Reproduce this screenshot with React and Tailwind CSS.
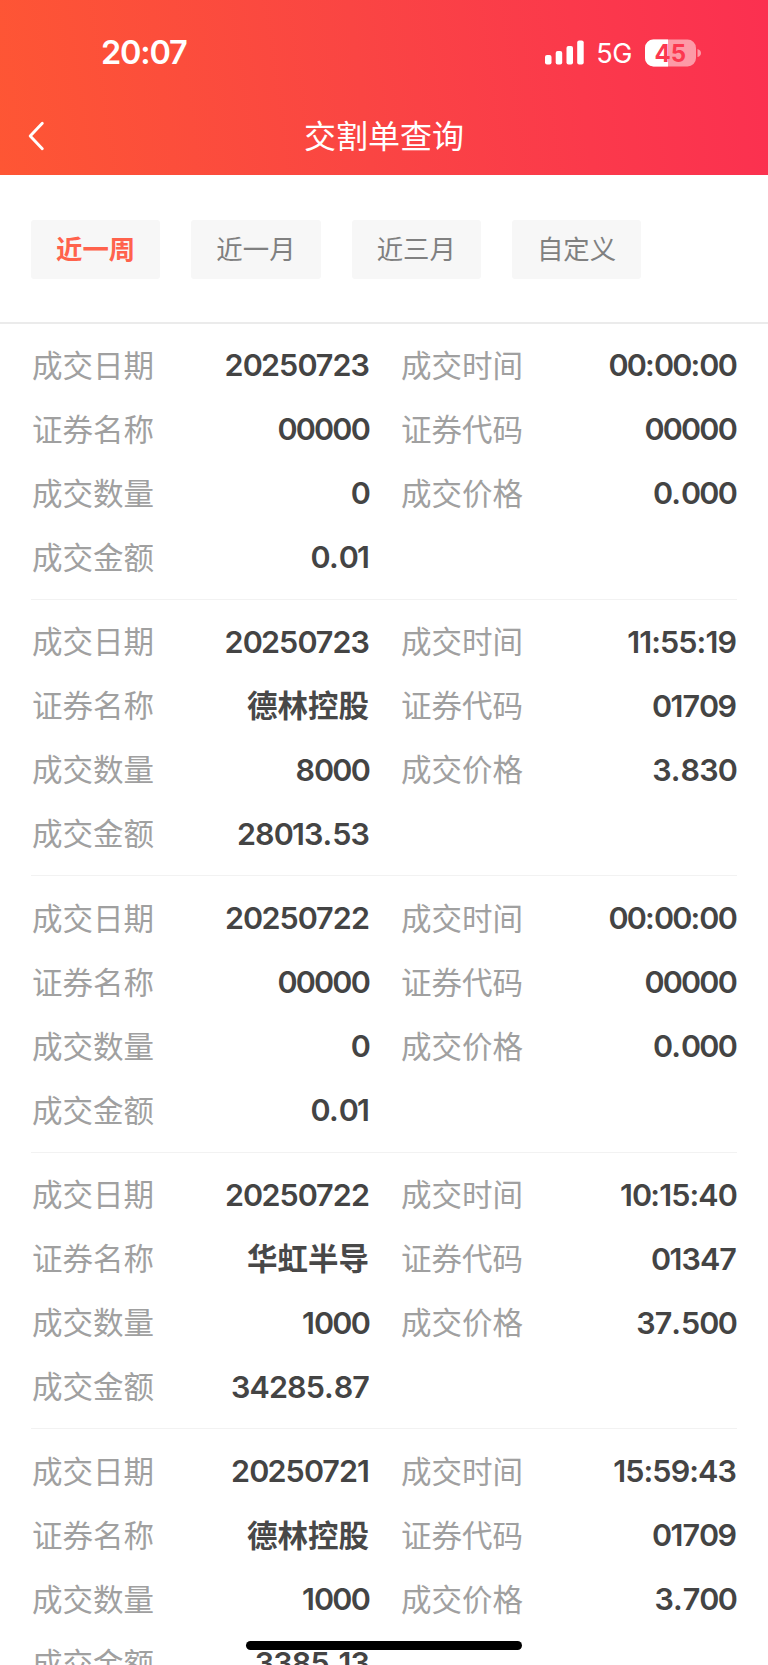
const filters = ['近一周', '近一月', '近三月', '自定义'];

const records = [
  { date: '20250723', time: '00:00:00', name: '00000', code: '00000', count: '0', price: '0.000', amount: '0.01' },
  { date: '20250723', time: '11:55:19', name: '德林控股', code: '01709', count: '8000', price: '3.830', amount: '28013.53' },
  { date: '20250722', time: '00:00:00', name: '00000', code: '00000', count: '0', price: '0.000', amount: '0.01' },
  { date: '20250722', time: '10:15:40', name: '华虹半导', code: '01347', count: '1000', price: '37.500', amount: '34285.87' },
  { date: '20250721', time: '15:59:43', name: '德林控股', code: '01709', count: '1000', price: '3.700', amount: '3385.13' },
];

function StatusBar() {
  return (
    <div className="flex h-[98px] items-center justify-between pt-[7px] pr-[66px] pl-[101px]">
      <span className="pt-[2px] text-[32.5px] leading-none font-semibold tracking-[-1.2px]">20:07</span>
      <div className="flex items-center">
        <svg className="mb-px" width="40" height="26" viewBox="0 0 40 26" fill="#fff">
          <rect x="1" y="16" width="6.5" height="9.5" rx="2" />
          <rect x="11.7" y="12" width="6.5" height="13.5" rx="2" />
          <rect x="22.5" y="7" width="6.5" height="18.5" rx="2" />
          <rect x="33.2" y="1.5" width="6.5" height="24" rx="2" />
        </svg>
        <span className="ml-[12px] pt-[2px] text-[27px] leading-none tracking-[-0.4px]">5G</span>
        <svg className="ml-[13px]" width="57" height="28" viewBox="0 0 57 28">
          <clipPath id="level">
            <rect x="0" y="0" width="23" height="28" />
          </clipPath>
          <rect x="0" y="0.5" width="51" height="27" rx="8.5" fill="#fff" fillOpacity="0.5" />
          <rect x="0" y="0.5" width="51" height="27" rx="8.5" fill="#fff" clipPath="url(#level)" />
          <path d="M52.5 10 Q56 11 56 14 Q56 17 52.5 18 Z" fill="#fff" fillOpacity="0.5" />
          <text x="25.3" y="22.5" textAnchor="middle" fontSize="24" fontWeight="700" fill="#fc3850">45</text>
        </svg>
      </div>
    </div>
  );
}

function Header() {
  return (
    <header className="h-[175px] bg-linear-[82deg,#fe5634_0%,#fa4543_47%,#fb394b_75%,#fb3050_100%] text-white">
      <StatusBar />
      <div className="grid h-[77px] grid-cols-[80px_1fr_80px] items-center">
        <svg className="mb-[2px] ml-[28px]" width="18" height="30" viewBox="0 0 18 30" fill="none" stroke="#fff" strokeWidth="2.9" strokeLinecap="round" strokeLinejoin="round">
          <path d="M14.3 2.2 L2.2 15 L14.3 27.8" />
        </svg>
        <h1 className="text-center text-[32px] leading-none font-normal">交割单查询</h1>
      </div>
    </header>
  );
}

// zeros sit tighter and the decimal point looser than the font's own spacing
function Value({ text }) {
  return (
    <span className="font-semibold tracking-[-0.9px] text-[#444]">
      {text.split(/(0+|\.)/).map((part, i) => {
        if (part === '.') return <span key={i} className="tracking-[0px]">{part}</span>;
        if (part.startsWith('0')) return <span key={i} className="tracking-[-1.8px]">{part}</span>;
        return part;
      })}
    </span>
  );
}

function Field({ label, value }) {
  return (
    <div className="flex h-[64px] items-center justify-between">
      <span className="pt-px text-[#a0a0a0]">{label}</span>
      {value && /^[\d.:]+$/.test(value) && <Value text={value} />}
      {value && !/^[\d.:]+$/.test(value) && <span className="pt-px font-bold text-[#484848]">{value}</span>}
    </div>
  );
}

function Record({ record }) {
  return (
    <li className="grid h-[276.5px] grid-cols-[337px_335px] content-start gap-x-[32px] border-b border-[#f2f2f2] pt-[10.5px] pl-px">
      <Field label="成交日期" value={record.date} />
      <Field label="成交时间" value={record.time} />
      <Field label="证券名称" value={record.name} />
      <Field label="证券代码" value={record.code} />
      <Field label="成交数量" value={record.count} />
      <Field label="成交价格" value={record.price} />
      <Field label="成交金额" value={record.amount} />
    </li>
  );
}

export default function App() {
  return (
    <div className="relative h-[1665px] w-[768px] overflow-hidden bg-white font-['Inter','Noto_Sans_CJK_SC',sans-serif]">
      <Header />
      <div className="flex h-[149px] gap-[31px] border-b-2 border-[#ebebeb] pt-[45px] pl-[31px]">
        {filters.map((name, i) => (
          <button
            key={name}
            className={
              i === 0
                ? 'h-[59px] w-[129.3px] rounded-[3px] bg-[#f7f7f7] text-[26.4px] leading-none font-bold text-[#ff624c]'
                : 'h-[59px] w-[129.3px] rounded-[3px] bg-[#f7f7f7] text-[26.4px] leading-none font-normal text-[#808080]'
            }
          >
            {name}
          </button>
        ))}
      </div>
      <ul className="mx-[31px] -mt-px text-[30.5px] leading-none">
        {records.map((record, i) => (
          <Record key={i} record={record} />
        ))}
      </ul>
      {/* home indicator */}
      <div className="absolute bottom-[15px] left-[246px] h-[9px] w-[276px] rounded-full bg-black" />
    </div>
  );
}
